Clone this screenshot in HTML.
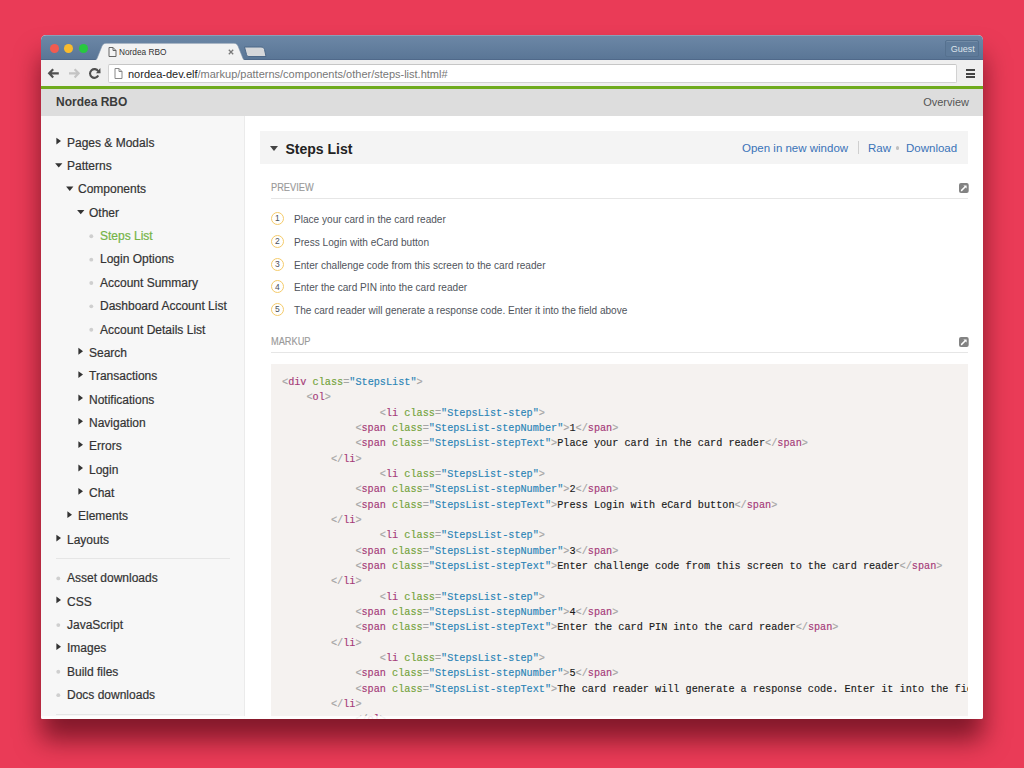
<!DOCTYPE html>
<html><head><meta charset="utf-8"><style>
*{margin:0;padding:0;box-sizing:border-box}
html,body{width:1024px;height:768px;overflow:hidden}
body{background:#ea3b57;font-family:"Liberation Sans",sans-serif;position:relative}
.a{position:absolute;white-space:nowrap}
#shadow{position:absolute;left:41px;top:35px;width:942px;height:684px;border-radius:5px;box-shadow:0 21px 26px rgba(60,0,12,.6)}
#win{position:absolute;left:41px;top:35px;width:942px;height:684px;border-radius:5px 5px 2px 2px;overflow:hidden;background:#fff}
#tabbar{position:absolute;left:0;top:0;width:942px;height:25px;background:linear-gradient(#6c87a6,#5a7696);border-top:1px solid #8aa0b8;border-bottom:1px solid #50698a}
.tl{position:absolute;top:9px;width:9px;height:9px;border-radius:50%}
#toolbar{position:absolute;left:0;top:25px;width:942px;height:26px;background:#efefef}
#addr{position:absolute;left:67px;top:4px;width:849px;height:19px;background:#fff;border:1px solid #d2d2d2;border-top-color:#c6c6c6;border-radius:2px}
#green{position:absolute;left:0;top:51px;width:942px;height:3px;background:#6fab1e}
#hdr{position:absolute;left:0;top:54px;width:942px;height:27px;background:#dddddd}
#side{position:absolute;left:0;top:81px;width:204px;height:603px;background:#f7f7f7;border-right:1px solid #ebebeb}
.si{font-size:12px;color:#333;line-height:14px;-webkit-text-stroke-width:0.2px}
.trr{position:absolute;width:0;height:0;border-top:3.8px solid transparent;border-bottom:3.8px solid transparent;border-left:5px solid #333}
.trd{position:absolute;width:0;height:0;border-left:3.8px solid transparent;border-right:3.8px solid transparent;border-top:4.6px solid #333}
.dot{position:absolute;width:3.5px;height:3.5px;border-radius:50%;background:#d2d2d2}
.code{white-space:pre;font-family:"Liberation Mono",monospace;font-size:10.2px;line-height:15.33px;color:#1a1a1a;-webkit-text-stroke-width:0.15px}
.p{color:#a5a5a5}.t{color:#a53a78}.n{color:#72a23a}.v{color:#2a84b6}
.step{font-size:10.08px;color:#50545c;line-height:12px}
.circ{position:absolute;width:13.2px;height:13.2px;border:1.7px solid #f5cb6a;border-radius:50%;font-size:8.5px;color:#4a4f5a;text-align:center;line-height:11px;padding-top:0.3px}
.lbl{font-size:10.5px;color:#9a9a9a;line-height:12px;transform:scaleX(0.88);transform-origin:0 0;-webkit-text-stroke-width:0.15px}
.lnk{font-size:11.5px;color:#3a73b8;line-height:13px}
.ico{position:absolute;width:9px;height:9px;border-radius:2px;background:#7b7b7b}
</style></head><body>
<div id="shadow"></div>
<div id="win">
<div id="tabbar">
<div class="tl" style="left:9px;top:7.6px;background:#f25b50"></div>
<div class="tl" style="left:23px;top:7.6px;background:#f9bb2d"></div>
<div class="tl" style="left:38px;top:7.6px;background:#27c93f"></div>
</div>
<svg class="a" style="left:0;top:0" width="942" height="26">
<path d="M51 26 C55 26 56 24 57 21 L61 11 C62 9.3 63 8.3 65 8.3 L193 8.3 C195 8.3 196 9.3 197 11 L201 21 C202 24 203 26 207 26 Z" fill="#f2f2f2" stroke="#7f93aa" stroke-width="0.6"/>
<path d="M203.5 12 L220 12 C222 12 223 13 223.5 14.5 L225 21.5 L208 21.5 C206.5 21.5 206 21 205.5 19.5 Z" fill="#d5d7da" stroke="#4d6888" stroke-width="1"/>
</svg>
<svg class="a" style="left:66.5px;top:11.5px" width="9" height="11"><path d="M1 0.5 H5 L8 3.5 V9.5 H1 Z M5 0.5 V3.5 H8" fill="#f4f4f4" stroke="#666" stroke-width="1"/></svg>
<div class="a" style="left:78px;top:12px;font-size:8.3px;color:#333;line-height:10px">Nordea RBO</div>
<svg class="a" style="left:186.5px;top:14px" width="6" height="6"><path d="M0.8 0.8 L5.2 5.2 M5.2 0.8 L0.8 5.2" stroke="#7a7a7a" stroke-width="1.3"/></svg>
<div class="a" style="left:904px;top:4.5px;width:34px;height:17px;border:1px solid #56718f;border-radius:2px;background:#5f7b9a;box-shadow:inset 0 1px 0 rgba(255,255,255,.12)"></div>
<div class="a" style="left:909.8px;top:8.5px;font-size:9px;color:#dde3ea;line-height:11px">Guest</div>
<div id="toolbar"><div id="addr"></div></div>
<svg class="a" style="left:0;top:25px" width="70" height="26">
<path d="M8.2 13.35 H17.8 M12.2 9.3 L8.2 13.35 L12.2 17.4" fill="none" stroke="#505050" stroke-width="2.2"/>
<path d="M28 13.35 H37.6 M33.6 9.3 L37.6 13.35 L33.6 17.4" fill="none" stroke="#c4c4c4" stroke-width="2.2"/>
<path d="M57.2 11.2 A4.4 4.4 0 1 0 57.3 15.6" fill="none" stroke="#505050" stroke-width="2.1"/>
<path d="M55 13.2 L59.6 13.2 L59.3 8.0 Z" fill="#505050"/>
</svg>
<svg class="a" style="left:73px;top:33px" width="9" height="11"><path d="M1 0.5 H5 L8 3.5 V10.5 H1 Z M5 0.5 V3.5 H8" fill="#fff" stroke="#888" stroke-width="1"/></svg>
<div class="a" style="left:87px;top:33px;font-size:11px;line-height:13px;color:#777"><span style="color:#222">nordea-dev.elf</span>/markup/patterns/components/other/steps-list.html#</div>
<div class="a" style="left:925px;top:34px;width:9px;height:2px;background:#444"></div>
<div class="a" style="left:925px;top:37.5px;width:9px;height:2px;background:#444"></div>
<div class="a" style="left:925px;top:41px;width:9px;height:2px;background:#444"></div>
<div id="green"></div>
<div id="hdr">
<div class="a" style="left:15px;top:6.2px;font-size:12px;font-weight:bold;color:#3b3b3b;line-height:14px">Nordea RBO</div>
<div class="a" style="right:14px;top:6.8px;font-size:11px;color:#555;line-height:13px">Overview</div>
</div>
<div id="side"></div>
<div class="a si" style="left:26px;top:100.70px;color:#333">Pages &amp; Modals</div>
<div class="a si" style="left:26px;top:124.05px;color:#333">Patterns</div>
<div class="a si" style="left:37px;top:147.40px;color:#333">Components</div>
<div class="a si" style="left:48px;top:170.75px;color:#333">Other</div>
<div class="a si" style="left:59px;top:194.10px;color:#74b446">Steps List</div>
<div class="a si" style="left:59px;top:217.45px;color:#333">Login Options</div>
<div class="a si" style="left:59px;top:240.80px;color:#333">Account Summary</div>
<div class="a si" style="left:59px;top:264.15px;color:#333">Dashboard Account List</div>
<div class="a si" style="left:59px;top:287.50px;color:#333">Account Details List</div>
<div class="a si" style="left:48px;top:310.85px;color:#333">Search</div>
<div class="a si" style="left:48px;top:334.20px;color:#333">Transactions</div>
<div class="a si" style="left:48px;top:357.55px;color:#333">Notifications</div>
<div class="a si" style="left:48px;top:380.90px;color:#333">Navigation</div>
<div class="a si" style="left:48px;top:404.25px;color:#333">Errors</div>
<div class="a si" style="left:48px;top:427.60px;color:#333">Login</div>
<div class="a si" style="left:48px;top:450.95px;color:#333">Chat</div>
<div class="a si" style="left:37px;top:474.30px;color:#333">Elements</div>
<div class="a si" style="left:26px;top:497.65px;color:#333">Layouts</div>
<div class="a" style="left:15px;top:523px;width:174px;height:1px;background:#e6e6e6"></div>
<div class="a si" style="left:26px;top:536.20px;color:#333">Asset downloads</div>
<div class="a si" style="left:26px;top:559.55px;color:#333">CSS</div>
<div class="a si" style="left:26px;top:582.90px;color:#333">JavaScript</div>
<div class="a si" style="left:26px;top:606.25px;color:#333">Images</div>
<div class="a si" style="left:26px;top:629.60px;color:#333">Build files</div>
<div class="a si" style="left:26px;top:652.95px;color:#333">Docs downloads</div>
<svg class="a" style="left:0;top:0" width="204" height="684"><polygon points="15.40,102.70 20.00,106.10 15.40,109.50" fill="#333"/><polygon points="14.10,128.25 21.40,128.25 17.75,132.55" fill="#333"/><polygon points="25.10,151.60 32.40,151.60 28.75,155.90" fill="#333"/><polygon points="36.10,174.95 43.40,174.95 39.75,179.25" fill="#333"/><circle cx="50.30" cy="201.30" r="1.95" fill="#cfcfcf"/><circle cx="50.30" cy="224.65" r="1.95" fill="#cfcfcf"/><circle cx="50.30" cy="248.00" r="1.95" fill="#cfcfcf"/><circle cx="50.30" cy="271.35" r="1.95" fill="#cfcfcf"/><circle cx="50.30" cy="294.70" r="1.95" fill="#cfcfcf"/><polygon points="37.40,312.85 42.00,316.25 37.40,319.65" fill="#333"/><polygon points="37.40,336.20 42.00,339.60 37.40,343.00" fill="#333"/><polygon points="37.40,359.55 42.00,362.95 37.40,366.35" fill="#333"/><polygon points="37.40,382.90 42.00,386.30 37.40,389.70" fill="#333"/><polygon points="37.40,406.25 42.00,409.65 37.40,413.05" fill="#333"/><polygon points="37.40,429.60 42.00,433.00 37.40,436.40" fill="#333"/><polygon points="37.40,452.95 42.00,456.35 37.40,459.75" fill="#333"/><polygon points="26.40,476.30 31.00,479.70 26.40,483.10" fill="#333"/><polygon points="15.40,499.65 20.00,503.05 15.40,506.45" fill="#333"/><circle cx="17.30" cy="543.40" r="1.95" fill="#cfcfcf"/><polygon points="15.40,561.55 20.00,564.95 15.40,568.35" fill="#333"/><circle cx="17.30" cy="590.10" r="1.95" fill="#cfcfcf"/><polygon points="15.40,608.25 20.00,611.65 15.40,615.05" fill="#333"/><circle cx="17.30" cy="636.80" r="1.95" fill="#cfcfcf"/><circle cx="17.30" cy="660.15" r="1.95" fill="#cfcfcf"/></svg>
<div class="a" style="left:15px;top:679px;width:174px;height:1px;background:#e6e6e6"></div>
<div class="a" style="left:219px;top:96px;width:708px;height:33px;background:#f4f4f4"></div>
<div class="trd" style="left:229px;top:111px;border-left-width:4px;border-right-width:4px;border-top-width:5px;border-top-color:#444"></div>
<div class="a" style="left:244.5px;top:106.00px;font-size:14px;font-weight:bold;color:#222;line-height:16px">Steps List</div>
<div class="a lnk" style="left:701px;top:106.80px">Open in new window</div>
<div class="a" style="left:817px;top:106px;width:1px;height:13px;background:#cfcfcf"></div>
<div class="a lnk" style="left:827px;top:106.80px">Raw</div>
<div class="dot" style="left:854.5px;top:111px;background:#c0c0c0"></div>
<div class="a lnk" style="left:865px;top:106.80px">Download</div>
<div class="a lbl" style="left:230.3px;top:146.13px">PREVIEW</div>
<div class="a" style="left:230px;top:163px;width:697px;height:1px;background:#e6e6e6"></div>
<svg class="a" style="left:918.20px;top:148.00px" width="10" height="10"><rect x="0" y="0" width="9.7" height="9.9" rx="2" fill="#838383"/><path d="M2.6 7.4 L6.2 3.8" stroke="#fff" stroke-width="1.5" stroke-linecap="round"/><path d="M4.4 2.4 L7.6 2.4 L7.6 5.6 Z" fill="#fff"/></svg>
<div class="circ" style="left:229.8px;top:177.20px">1</div>
<div class="a step" style="left:253px;top:179.20px">Place your card in the card reader</div>
<div class="circ" style="left:229.8px;top:199.90px">2</div>
<div class="a step" style="left:253px;top:201.90px">Press Login with eCard button</div>
<div class="circ" style="left:229.8px;top:222.60px">3</div>
<div class="a step" style="left:253px;top:224.60px">Enter challenge code from this screen to the card reader</div>
<div class="circ" style="left:229.8px;top:245.30px">4</div>
<div class="a step" style="left:253px;top:247.30px">Enter the card PIN into the card reader</div>
<div class="circ" style="left:229.8px;top:268.00px">5</div>
<div class="a step" style="left:253px;top:270.00px">The card reader will generate a response code. Enter it into the field above</div>
<div class="a lbl" style="left:230.3px;top:299.73px">MARKUP</div>
<div class="a" style="left:230px;top:317px;width:697px;height:1px;background:#e6e6e6"></div>
<svg class="a" style="left:918.20px;top:302.00px" width="10" height="10"><rect x="0" y="0" width="9.7" height="9.9" rx="2" fill="#838383"/><path d="M2.6 7.4 L6.2 3.8" stroke="#fff" stroke-width="1.5" stroke-linecap="round"/><path d="M4.4 2.4 L7.6 2.4 L7.6 5.6 Z" fill="#fff"/></svg>
<div class="a" style="left:230px;top:328.5px;width:697px;height:400px;background:#f5f2f0;overflow:hidden">
<pre class="a code" style="left:11px;top:11.45px"><span class="p">&lt;</span><span class="t">div</span> <span class="n">class</span><span class="p">=</span><span class="v">"StepsList"</span><span class="p">&gt;</span>
    <span class="p">&lt;</span><span class="t">ol</span><span class="p">&gt;</span>
                <span class="p">&lt;</span><span class="t">li</span> <span class="n">class</span><span class="p">=</span><span class="v">"StepsList-step"</span><span class="p">&gt;</span>
            <span class="p">&lt;</span><span class="t">span</span> <span class="n">class</span><span class="p">=</span><span class="v">"StepsList-stepNumber"</span><span class="p">&gt;</span>1<span class="p">&lt;/</span><span class="t">span</span><span class="p">&gt;</span>
            <span class="p">&lt;</span><span class="t">span</span> <span class="n">class</span><span class="p">=</span><span class="v">"StepsList-stepText"</span><span class="p">&gt;</span>Place your card in the card reader<span class="p">&lt;/</span><span class="t">span</span><span class="p">&gt;</span>
        <span class="p">&lt;/</span><span class="t">li</span><span class="p">&gt;</span>
                <span class="p">&lt;</span><span class="t">li</span> <span class="n">class</span><span class="p">=</span><span class="v">"StepsList-step"</span><span class="p">&gt;</span>
            <span class="p">&lt;</span><span class="t">span</span> <span class="n">class</span><span class="p">=</span><span class="v">"StepsList-stepNumber"</span><span class="p">&gt;</span>2<span class="p">&lt;/</span><span class="t">span</span><span class="p">&gt;</span>
            <span class="p">&lt;</span><span class="t">span</span> <span class="n">class</span><span class="p">=</span><span class="v">"StepsList-stepText"</span><span class="p">&gt;</span>Press Login with eCard button<span class="p">&lt;/</span><span class="t">span</span><span class="p">&gt;</span>
        <span class="p">&lt;/</span><span class="t">li</span><span class="p">&gt;</span>
                <span class="p">&lt;</span><span class="t">li</span> <span class="n">class</span><span class="p">=</span><span class="v">"StepsList-step"</span><span class="p">&gt;</span>
            <span class="p">&lt;</span><span class="t">span</span> <span class="n">class</span><span class="p">=</span><span class="v">"StepsList-stepNumber"</span><span class="p">&gt;</span>3<span class="p">&lt;/</span><span class="t">span</span><span class="p">&gt;</span>
            <span class="p">&lt;</span><span class="t">span</span> <span class="n">class</span><span class="p">=</span><span class="v">"StepsList-stepText"</span><span class="p">&gt;</span>Enter challenge code from this screen to the card reader<span class="p">&lt;/</span><span class="t">span</span><span class="p">&gt;</span>
        <span class="p">&lt;/</span><span class="t">li</span><span class="p">&gt;</span>
                <span class="p">&lt;</span><span class="t">li</span> <span class="n">class</span><span class="p">=</span><span class="v">"StepsList-step"</span><span class="p">&gt;</span>
            <span class="p">&lt;</span><span class="t">span</span> <span class="n">class</span><span class="p">=</span><span class="v">"StepsList-stepNumber"</span><span class="p">&gt;</span>4<span class="p">&lt;/</span><span class="t">span</span><span class="p">&gt;</span>
            <span class="p">&lt;</span><span class="t">span</span> <span class="n">class</span><span class="p">=</span><span class="v">"StepsList-stepText"</span><span class="p">&gt;</span>Enter the card PIN into the card reader<span class="p">&lt;/</span><span class="t">span</span><span class="p">&gt;</span>
        <span class="p">&lt;/</span><span class="t">li</span><span class="p">&gt;</span>
                <span class="p">&lt;</span><span class="t">li</span> <span class="n">class</span><span class="p">=</span><span class="v">"StepsList-step"</span><span class="p">&gt;</span>
            <span class="p">&lt;</span><span class="t">span</span> <span class="n">class</span><span class="p">=</span><span class="v">"StepsList-stepNumber"</span><span class="p">&gt;</span>5<span class="p">&lt;/</span><span class="t">span</span><span class="p">&gt;</span>
            <span class="p">&lt;</span><span class="t">span</span> <span class="n">class</span><span class="p">=</span><span class="v">"StepsList-stepText"</span><span class="p">&gt;</span>The card reader will generate a response code. Enter it into the field above<span class="p">&lt;/</span><span class="t">span</span><span class="p">&gt;</span>
        <span class="p">&lt;/</span><span class="t">li</span><span class="p">&gt;</span>
            <span class="p">&lt;/</span><span class="t">ol</span><span class="p">&gt;</span></pre>
</div>
<div class="a" style="left:0;top:681px;width:942px;height:3px;background:rgba(255,255,255,.85)"></div>
</div>
</body></html>
